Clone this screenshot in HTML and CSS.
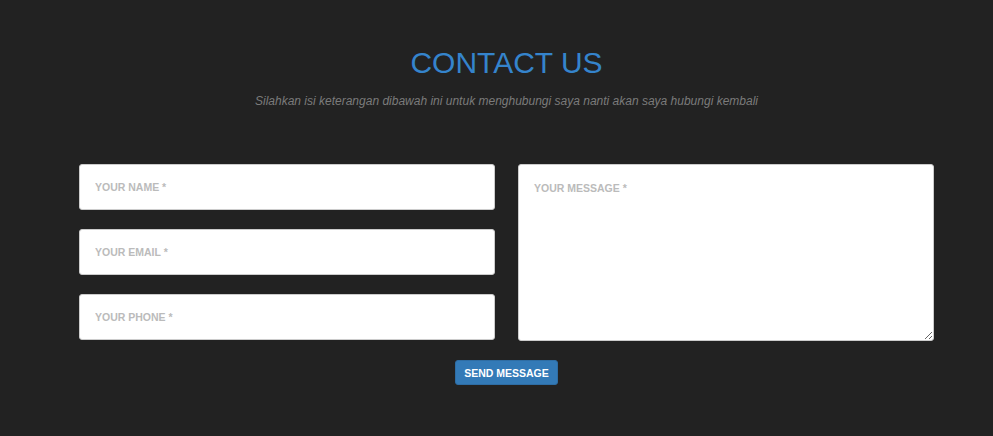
FILE: index.html
```html
<!DOCTYPE html>
<html>
<head>
<meta charset="utf-8">
<link rel="stylesheet" href="styles.css">
</head>
<body>
<section class="contact">
  <div class="heading">
    <h2 class="title">CONTACT US</h2>
    <h3 class="subtitle">Silahkan isi keterangan dibawah ini untuk menghubungi saya nanti akan saya hubungi kembali</h3>
  </div>
  <form class="form">
    <div class="columns">
      <div class="col">
        <input class="field" type="text" placeholder="YOUR NAME *">
        <input class="field" type="email" placeholder="YOUR EMAIL *">
        <input class="field" type="tel" placeholder="YOUR PHONE *">
      </div>
      <div class="col">
        <textarea class="field message" placeholder="YOUR MESSAGE *"></textarea>
      </div>
    </div>
    <div class="actions">
      <button class="btn" type="button">SEND MESSAGE</button>
    </div>
  </form>
</section>
</body>
</html>
```

FILE: styles.css
```css
html, body {
  margin: 0;
  padding: 0;
  background: #222222;
  font-family: "Liberation Sans", Arial, sans-serif;
}
.contact {
  padding: 46px 59px 0 79px;
}
.heading {
  text-align: center;
}
.title {
  margin: 0;
  font-size: 30px;
  font-weight: 400;
  line-height: 34px;
  color: #3584cc;
}
.subtitle {
  margin: 13px 0 0;
  font-size: 12px;
  font-style: italic;
  font-weight: 400;
  line-height: 16px;
  color: #7b7b7b;
}
.form {
  margin-top: 55px;
}
.columns {
  display: grid;
  grid-template-columns: 416px 416px;
  column-gap: 23px;
}
.col {
  display: flex;
  flex-direction: column;
  gap: 19px;
}
.field {
  box-sizing: border-box;
  width: 100%;
  height: 46px;
  margin: 0;
  padding: 0 15px;
  border: 1px solid #cccccc;
  border-radius: 3px;
  background: #ffffff;
  font-family: "Liberation Sans", Arial, sans-serif;
  font-size: 10.5px;
  font-weight: 700;
  color: #555;
  outline: none;
}
.field::placeholder {
  color: #bbbbbb;
  text-transform: uppercase;
}
.message {
  height: 177px;
  padding: 17px 15px;
  resize: vertical;
}
.actions {
  display: flex;
  justify-content: center;
  margin-top: 19px;
}
.btn {
  height: 25px;
  padding: 0 8px;
  border: 1px solid #2e6da4;
  border-radius: 3px;
  background: #337ab7;
  color: #ffffff;
  font-family: "Liberation Sans", Arial, sans-serif;
  font-size: 10.5px;
  font-weight: 700;
}
```
